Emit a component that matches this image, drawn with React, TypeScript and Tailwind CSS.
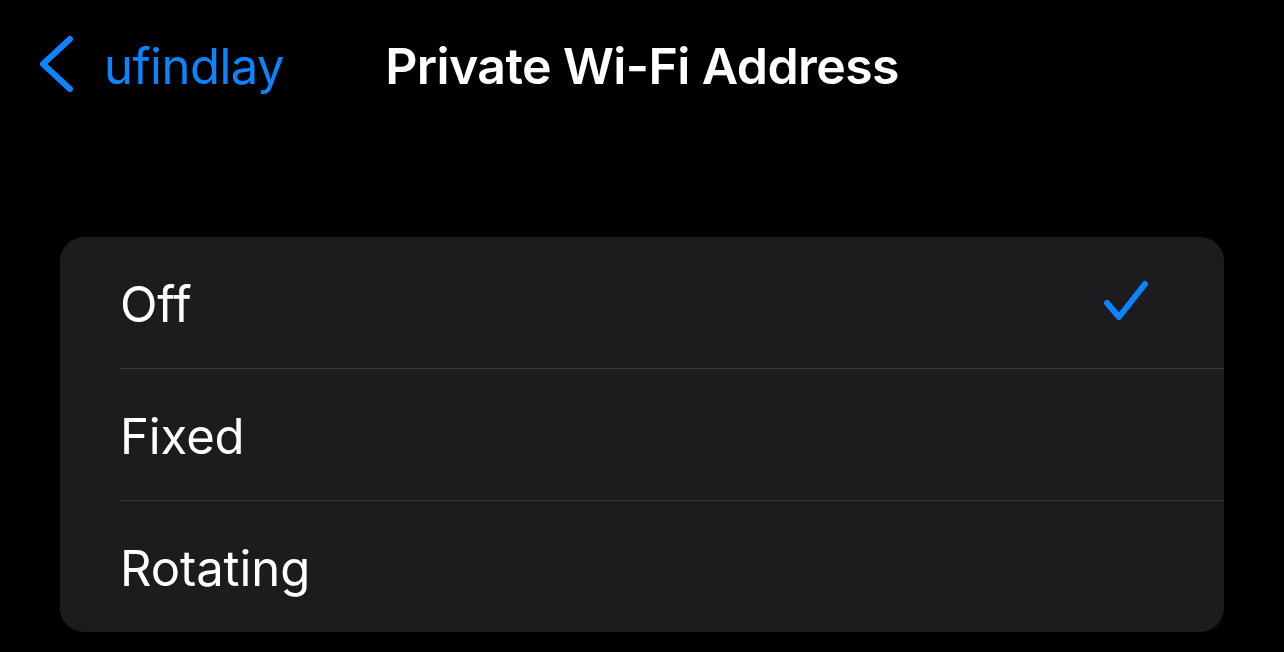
import React from 'react';

const options = ['Off', 'Fixed', 'Rotating'];

export default function App() {
  const selected = 'Off';

  return (
    <div
      className="w-[1284px] h-[652px] bg-black text-white overflow-hidden"
      style={{ fontFamily: 'Inter, "Noto Sans", sans-serif' }}
    >
      {/* nav bar */}
      <div className="grid grid-cols-[1fr_auto_1fr] items-center h-[132px]">
        <button className="flex items-center text-[#0a84ff] pl-[37px] justify-self-start">
          <svg width="38" height="60" viewBox="0 0 38 60" fill="none">
            <path d="M33 3 L6 28 L33 53" stroke="#0a84ff" strokeWidth="6" strokeLinecap="round" strokeLinejoin="round" />
          </svg>
          <span className="ml-[29px] text-[49px] leading-none tracking-[-0.5px]">ufindlay</span>
        </button>
        <h1 className="text-[50px] font-semibold leading-none tracking-[-0.6px]">Private Wi-Fi Address</h1>
        <div />
      </div>

      {/* list */}
      <div className="mx-[60px] mt-[105px] bg-[#1c1c1e] rounded-[24px] overflow-hidden">
        {options.map((opt, i) => (
          <div key={opt}>
            {i > 0 && <div className="ml-[60px] h-px bg-[#38383a]" />}
            <div className="h-[131px] flex items-center justify-between pl-[60px] pr-[74px]">
              <span className="text-[49px] leading-none tracking-[-0.1px] pt-[3px]">{opt}</span>
              {opt === selected && (
                <svg width="48" height="48" viewBox="0 0 48 48" fill="none">
                  <path d="M5 24 L17 38 L43 5" stroke="#0a84ff" strokeWidth="6" strokeLinecap="round" strokeLinejoin="round" />
                </svg>
              )}
            </div>
          </div>
        ))}
      </div>
    </div>
  );
}
